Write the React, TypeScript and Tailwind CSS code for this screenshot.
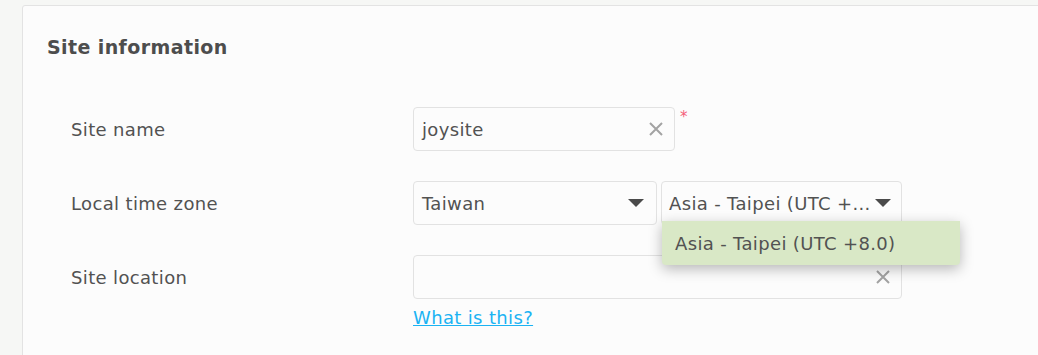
import React from "react";

const XIcon = () => (
  <svg width="16" height="16" viewBox="0 0 16 16" className="shrink-0">
    <path d="M2 2 L14 14 M14 2 L2 14" stroke="#a3a3a3" strokeWidth="2" strokeLinecap="butt" />
  </svg>
);

const Caret = () => (
  <svg width="16" height="10" viewBox="0 0 16 10" className="shrink-0">
    <path d="M0 1 L16 1 L8 9 Z" fill="#4a4a4a" />
  </svg>
);

export default function App() {
  return (
    <div
      className="h-[355px] w-[1038px] overflow-hidden bg-[#f6f7f5] pl-[22px] pt-[5px] text-[#525252]"
      style={{ fontFamily: '"DejaVu Sans", sans-serif' }}
    >
      <div className="h-[400px] w-[1030px] rounded-tl-[3px] border border-[#e3e3e3] bg-[#fcfcfc] pl-[24px] pt-[27px]">
        <h2 className="text-[19px] font-bold leading-[28px] tracking-[0.4px] text-[#4d4d4d]">Site information</h2>
        <div className="mt-[46px] flex flex-col gap-[30px] pl-[24px] text-[18px] tracking-[0.35px]">
          <div className="flex items-center">
            <div className="w-[342px]">Site name</div>
            <div className="flex h-[44px] w-[262px] items-center justify-between rounded-[4px] border border-[#e2e2e2] bg-[#fcfcfc] pl-[8px] pr-[10px]">
              <span>joysite</span>
              <XIcon />
            </div>
            <span className="ml-[5px] self-start pt-[2px] text-[15px] leading-[16px] text-[#f4607a]">*</span>
          </div>
          <div className="flex items-center">
            <div className="w-[342px]">Local time zone</div>
            <div className="flex h-[44px] w-[244px] items-center justify-between rounded-[4px] border border-[#e2e2e2] bg-[#fcfcfc] pl-[8px] pr-[12px]">
              <span>Taiwan</span>
              <Caret />
            </div>
            <div className="relative ml-[4px]">
              <div className="flex h-[44px] w-[241px] items-center justify-between rounded-[4px] border border-[#e2e2e2] bg-[#fcfcfc] pl-[7px] pr-[10px]">
                <span className="whitespace-nowrap">Asia - Taipei (UTC +...</span>
                <Caret />
              </div>
              <div className="absolute left-[1px] top-[40px] z-10 flex h-[44px] w-[298px] items-center whitespace-nowrap rounded-b-[4px] bg-[#d9e8c6] pl-[13px] shadow-[0_4px_14px_rgba(0,0,0,0.28)]">
                Asia - Taipei (UTC +8.0)
              </div>
            </div>
          </div>
          <div className="flex items-start">
            <div className="flex h-[44px] w-[342px] items-center">Site location</div>
            <div className="flex flex-col">
              <div className="flex h-[44px] w-[489px] items-center justify-end rounded-[4px] border border-[#e2e2e2] bg-[#fcfcfc] pr-[10px]">
                <XIcon />
              </div>
              <a href="#" className="mt-[6px] leading-[26px] text-[#1bb3f3] underline">
                What is this?
              </a>
            </div>
          </div>
        </div>
      </div>
    </div>
  );
}
